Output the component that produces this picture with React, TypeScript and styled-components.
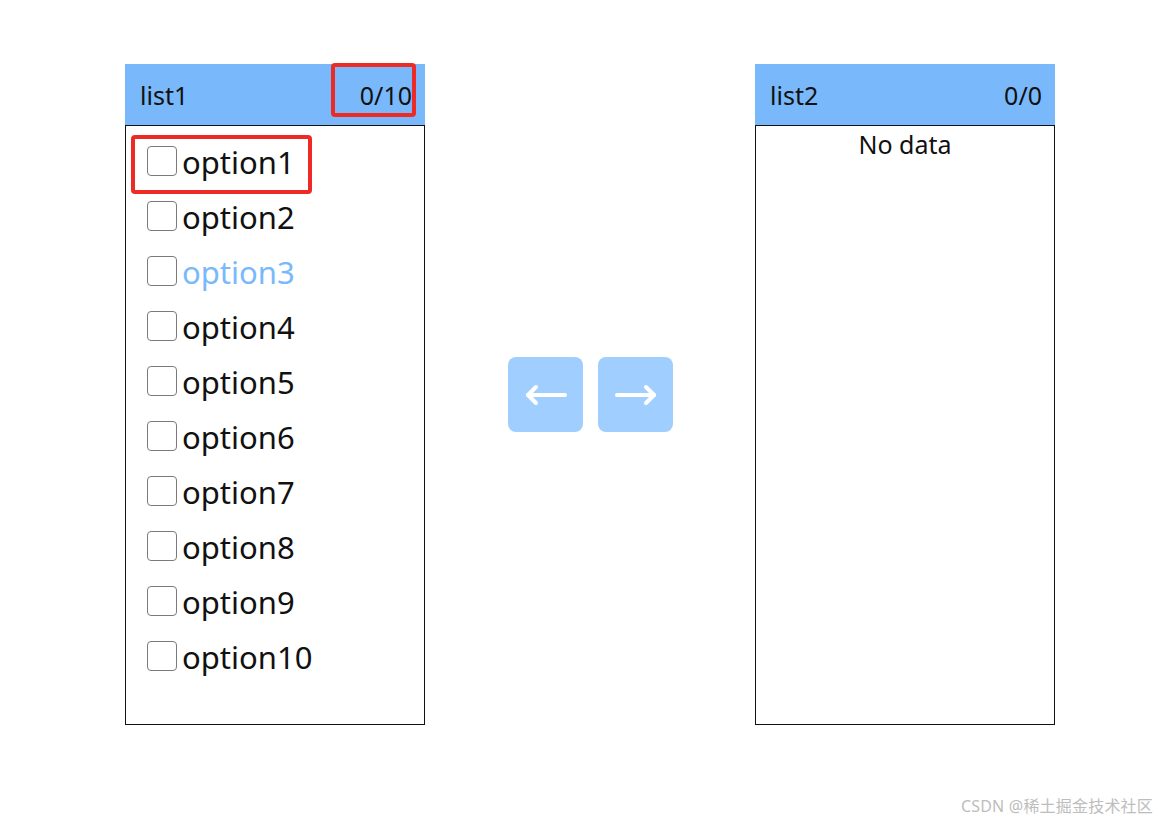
import styled, { createGlobalStyle } from "styled-components";

const GlobalStyle = createGlobalStyle`
  html, body {
    margin: 0;
    padding: 0;
    background: #ffffff;
    font-family: "Noto Sans", "Open Sans", "Noto Sans CJK SC", sans-serif;
  }
`;

const Page = styled.div`
  position: relative;
  width: 1161px;
  height: 823px;
  box-sizing: border-box;
  padding: 64px 0 0 125px;
  display: flex;
  align-items: flex-start;
`;

const Row = styled.div`
  display: flex;
  align-items: center;
`;

const Panel = styled.div`
  width: 300px;
  display: flex;
  flex-direction: column;
`;

const Header = styled.div`
  height: 61px;
  background: #79b9fb;
  display: flex;
  align-items: center;
  justify-content: space-between;
  padding: 0 13px 0 15px;
  font-size: 25px;
  color: #111;
`;

const Body = styled.div`
  height: 600px;
  border: 1px solid #111;
  box-sizing: border-box;
  padding: 8px 0 0 21px;
  display: flex;
  flex-direction: column;
`;

const Empty = styled.div`
  text-align: center;
  font-size: 25px;
  color: #111;
  margin: -7px 0 0 -21px;
`;

const Item = styled.label<{ $disabled?: boolean }>`
  height: 55px;
  display: flex;
  align-items: center;
  gap: 5px;
  font-size: 31px;
  color: ${(p) => (p.$disabled ? "#79b9fb" : "#111")};
`;

const Box = styled.span`
  width: 30px;
  height: 30px;
  border: 1px solid #7a7a7a;
  border-radius: 4px;
  box-sizing: border-box;
  background: #fff;
  margin-top: -2px;
`;

const Buttons = styled.div`
  display: flex;
  gap: 15px;
  margin: 0 82px 0 83px;
`;

const ArrowButton = styled.button`
  width: 75px;
  height: 75px;
  border: none;
  border-radius: 8px;
  background: #a0cfff;
  display: flex;
  align-items: center;
  justify-content: center;
  padding: 0;
`;

const Mark = styled.div`
  position: absolute;
  border: 4px solid #ee2a24;
  border-radius: 4px;
  box-sizing: border-box;
`;

const Watermark = styled.div`
  position: absolute;
  right: 8px;
  bottom: 6px;
  font-size: 16px;
  color: #bdbdbd;
  letter-spacing: 0.2px;
`;

const Arrow = ({ left }: { left?: boolean }) => (
  <svg width="44" height="22" viewBox="0 0 44 22" fill="none" stroke="#fff" strokeWidth="4" strokeLinecap="round" strokeLinejoin="round">
    {left ? (
      <>
        <path d="M4 11H41" />
        <path d="M12 3L4 11L12 19" />
      </>
    ) : (
      <>
        <path d="M3 11H40" />
        <path d="M32 3L40 11L32 19" />
      </>
    )}
  </svg>
);

const options = Array.from({ length: 10 }, (_, i) => `option${i + 1}`);

export default function App() {
  return (
    <Page>
      <GlobalStyle />
      <Row>
        <Panel>
          <Header>
            <span>list1</span>
            <span>0/10</span>
          </Header>
          <Body>
            {options.map((o, i) => (
              <Item key={o} $disabled={i === 2}>
                <Box />
                {o}
              </Item>
            ))}
          </Body>
        </Panel>
        <Buttons>
          <ArrowButton>
            <Arrow left />
          </ArrowButton>
          <ArrowButton>
            <Arrow />
          </ArrowButton>
        </Buttons>
        <Panel>
          <Header>
            <span>list2</span>
            <span>0/0</span>
          </Header>
          <Body>
            <Empty>No data</Empty>
          </Body>
        </Panel>
      </Row>
      <Mark style={{ left: 331, top: 63, width: 85, height: 54 }} />
      <Mark style={{ left: 131, top: 135, width: 181, height: 59 }} />
      <Watermark>CSDN @稀土掘金技术社区</Watermark>
    </Page>
  );
}
